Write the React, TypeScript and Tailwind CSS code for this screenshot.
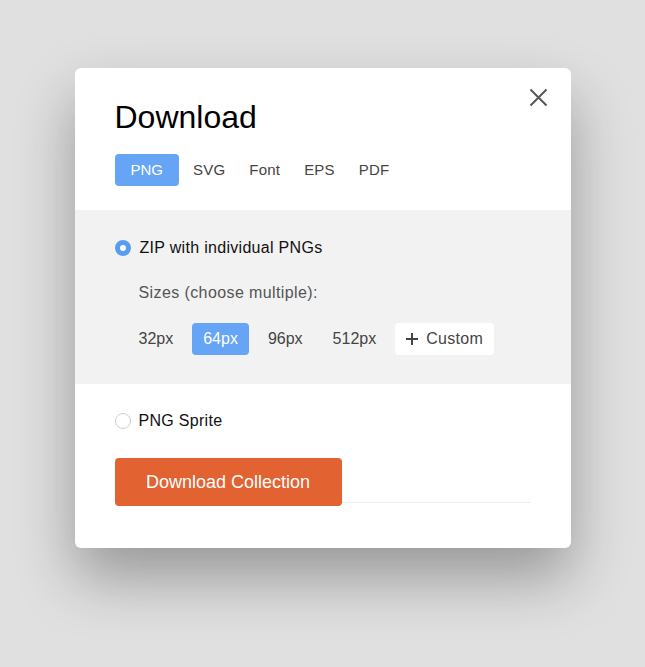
import React from 'react';

const formats = ['PNG', 'SVG', 'Font', 'EPS', 'PDF'];
const sizes = ['32px', '64px', '96px', '512px'];

const App: React.FC = () => {
  return (
    <div className="min-h-screen bg-[#e0e0e0] pt-[68px] font-['Liberation_Sans',Arial,sans-serif]">
      <div className="relative mx-auto w-[496px] rounded-[6px] bg-white shadow-[0_30px_60px_rgba(0,0,0,0.32)]">
        {/* Close */}
        <button className="absolute right-[23px] top-[20px] p-0">
          <svg width="19" height="19" viewBox="0 0 19 19" fill="none" stroke="#555" strokeWidth="2">
            <path d="M1.5 1.5 17.5 17.5M17.5 1.5 1.5 17.5" />
          </svg>
        </button>

        {/* Header */}
        <div className="px-10 pt-[31px]">
          <h2 className="text-[32px] leading-[36px] text-black">Download</h2>
          <div className="mt-[19px] flex items-center">
            {formats.map((f, i) => (
              <span
                key={f}
                className={
                  i === 0
                    ? 'mr-[2px] flex h-8 items-center rounded-[4px] bg-[#66a4f6] px-4 text-[15px] text-white'
                    : 'flex h-8 items-center px-3 text-[15px] tracking-[0.2px] text-[#444]'
                }
              >
                {f}
              </span>
            ))}
          </div>
        </div>

        {/* Zip option */}
        <div className="mt-6 bg-[#f2f2f2] px-10 pb-[29px] pt-[26px]">
          <label className="flex h-6 items-center gap-[9px]">
            <span className="h-4 w-4 rounded-full border-[5px] border-[#5a9cf2] bg-white"></span>
            <span className="text-[16px] tracking-[0.3px] text-[#111]">ZIP with individual PNGs</span>
          </label>
          <p className="ml-6 mt-[21px] h-6 text-[16px] leading-6 tracking-[0.4px] text-[#555]">Sizes (choose multiple):</p>
          <div className="ml-[13px] mt-[18px] flex items-center gap-2">
            {sizes.map((s) => (
              <span
                key={s}
                className={
                  s === '64px'
                    ? 'flex h-8 items-center rounded-[4px] bg-[#66a4f6] px-[11px] text-[16px] text-white'
                    : 'flex h-8 items-center px-[11px] text-[16px] text-[#444]'
                }
              >
                {s}
              </span>
            ))}
            <span className="flex h-8 items-center gap-2 rounded-[4px] bg-white px-[11px] text-[16px] tracking-[0.3px] text-[#444]">
              <svg width="12" height="12" viewBox="0 0 12 12" stroke="#444" strokeWidth="2">
                <path d="M6 0v12M0 6h12" />
              </svg>
              Custom
            </span>
          </div>
        </div>

        {/* Sprite option + action */}
        <div className="px-10 pb-[42px] pt-[25px]">
          <label className="flex h-6 items-center gap-2">
            <span className="h-4 w-4 rounded-full border border-[#cfcfcf] bg-white"></span>
            <span className="text-[16px] tracking-[0.3px] text-[#111]">PNG Sprite</span>
          </label>
          <div className="mt-[25px] flex items-end">
            <button className="h-12 w-[227px] rounded-[4px] bg-[#e36232] text-[18px] text-white">
              Download Collection
            </button>
            <div className="mb-[3px] flex-1 border-b border-[#eeeeee]"></div>
          </div>
        </div>
      </div>
    </div>
  );
};

export default App;
